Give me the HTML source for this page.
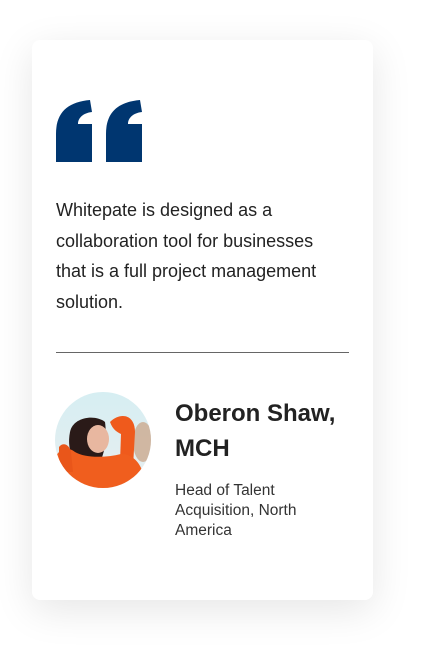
<!DOCTYPE html>
<html><head><meta charset="utf-8"><style>
html,body{margin:0;padding:0;background:#fff;}
body{width:439px;height:661px;position:relative;overflow:hidden;font-family:"Liberation Sans",sans-serif;}
.card{position:absolute;left:32px;top:40px;width:341px;height:560px;background:#fff;border-radius:8px;box-shadow:0 10px 40px rgba(0,0,0,0.10);}
.q{position:absolute;left:56px;top:100px;}
.txt{position:absolute;left:56px;top:195px;width:282px;font-size:18px;line-height:30.5px;color:#222;}
.hr{position:absolute;left:56px;top:352px;width:293px;height:1px;background:#666;}
.av{position:absolute;left:55px;top:392px;width:96px;height:96px;border-radius:50%;overflow:hidden;}
.name{position:absolute;left:175px;top:396px;font-size:24px;font-weight:bold;line-height:35px;color:#222;}
.role{position:absolute;left:175px;top:481px;font-size:15.5px;line-height:20px;color:#333;width:170px;}
</style></head><body>
<div class="card"></div>
<svg class="q" width="86" height="62" viewBox="0 0 86 62">
<path d="M0,62 L0,34 C0,12 12,2 34,0 L36,12 C27,13 22,18 22,24 L36,24 L36,62 Z" fill="#003670"/>
<path d="M50,62 L50,34 C50,12 62,2 84,0 L86,12 C77,13 72,18 72,24 L86,24 L86,62 Z" fill="#003670"/>
</svg>
<div class="txt">Whitepate is designed as a collaboration tool for businesses that is a full project management solution.</div>
<div class="hr"></div>
<div class="av"><svg width="96" height="96" viewBox="0 0 96 96">
<defs><linearGradient id="s" x1="0" y1="0" x2="0" y2="1"><stop offset="0" stop-color="#d6eef2"/><stop offset="1" stop-color="#e8eef0"/></linearGradient></defs>
<rect width="96" height="96" fill="url(#s)"/>
<ellipse cx="88" cy="50" rx="10" ry="20" fill="#c9a080" opacity="0.7"/>
<path d="M15,40 C18,25 40,22 50,30 C52,45 50,60 45,70 L20,70 C14,60 13,50 15,40Z" fill="#2a1a18"/>
<ellipse cx="43" cy="47" rx="11" ry="14" fill="#e8b7a0"/>
<path d="M55,30 C65,20 80,22 80,40 L78,75 L65,70 L66,42 C62,40 58,38 55,30Z" fill="#ef5a1c"/>
<path d="M0,70 C0,60 10,52 20,60 C30,66 50,66 66,62 C80,62 90,75 90,96 L0,96Z" fill="#f05e1e"/>
<path d="M4,55 C8,50 14,52 16,60 L18,80 L4,80Z" fill="#e9561a"/>
</svg></div>
<div class="name">Oberon Shaw,<br>MCH</div>
<div class="role">Head of Talent Acquisition, North America</div>
</body></html>
